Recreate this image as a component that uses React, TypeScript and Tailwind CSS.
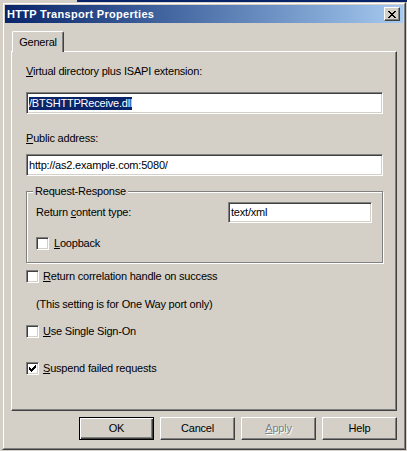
import React from 'react';

// classic Win2k style bevels
const raised = "border border-t-white border-l-white border-r-[#404040] border-b-[#404040] shadow-[inset_-1px_-1px_0_#808080]";
const sunken = "border border-t-[#808080] border-l-[#808080] border-r-white border-b-white shadow-[inset_1px_1px_0_#404040,inset_-1px_-1px_0_#d4d0c8]";

const CHECK = [
  [0, 2, 3], [1, 3, 3], [2, 4, 3], [3, 3, 3], [4, 2, 3], [5, 1, 3], [6, 0, 3],
];

const CROSS = [
  "XX....XX",
  ".XX..XX.",
  "..XXXX..",
  "...XX...",
  "..XXXX..",
  ".XX..XX.",
  "XX....XX",
];

function CheckMark() {
  return (
    <svg width="7" height="7" viewBox="0 0 7 7" shapeRendering="crispEdges">
      {CHECK.map(([x, y, h]) => (
        <rect key={x} x={x} y={y} width="1" height={h} fill="#000" />
      ))}
    </svg>
  );
}

function CloseGlyph() {
  return (
    <svg width="8" height="7" viewBox="0 0 8 7" shapeRendering="crispEdges">
      {CROSS.map((row, y) =>
        row.split('').map((c, x) =>
          c === 'X' ? <rect key={`${x}-${y}`} x={x} y={y} width="1" height="1" fill="#000" /> : null
        )
      )}
    </svg>
  );
}

function Checkbox({ checked = false }: { checked?: boolean }) {
  return (
    <div className={`w-[13px] h-[13px] bg-white flex items-center justify-center shrink-0 ${sunken}`}>
      {checked && <CheckMark />}
    </div>
  );
}

function Key({ children }: { children: React.ReactNode }) {
  return <span className="underline underline-offset-[1px] decoration-1">{children}</span>;
}

function CheckRow({ checked, keyChar, rest, gap = "ml-[4px]" }: { checked?: boolean; keyChar: string; rest: string; gap?: string }) {
  return (
    <div className="flex items-center h-[13px]">
      <Checkbox checked={checked} />
      <span className={`${gap} leading-[13px]`}>
        <Key>{keyChar}</Key>{rest}
      </span>
    </div>
  );
}

function Button({ label, isDefault, disabled }: { label: React.ReactNode; isDefault?: boolean; disabled?: boolean }) {
  const frame = isDefault
    ? "border border-black shadow-[inset_1px_1px_0_white,inset_-1px_-1px_0_#404040,inset_-2px_-2px_0_#808080]"
    : raised;
  return (
    <div className={`w-[75px] h-[23px] flex items-center justify-center ${frame}`}>
      <span className={disabled ? "text-[#808080] [text-shadow:1px_1px_0_white]" : ""}>{label}</span>
    </div>
  );
}

export default function App() {
  return (
    <div className="w-[407px] h-[451px] bg-[#d4d0c8] overflow-hidden text-[11px] tracking-[-0.2px] text-black font-['Liberation_Sans','Arial',sans-serif]">
      <div className="flex h-[2px]">
        <div className="w-[77px] bg-[#d4d0c8]" />
        <div className="flex-1 bg-[#0a246a]" />
      </div>

      {/* dialog window */}
      <div className="ml-[2px] w-[404px] h-[448px] border border-t-[#d4d0c8] border-l-[#d4d0c8] border-r-[#404040] border-b-[#404040]">
        <div className="h-full border border-t-white border-l-white border-r-[#808080] border-b-[#808080] p-px">
          {/* title bar */}
          <div className="h-[18px] flex items-center justify-between bg-linear-to-r from-[#0a246a] to-[#a6caf0]">
            <span className="pl-[2px] text-white font-bold tracking-[0.3px] leading-[18px]">HTTP Transport Properties</span>
            <div className={`w-[16px] h-[14px] mr-[3px] bg-[#d4d0c8] flex items-center justify-center ${raised}`}>
              <CloseGlyph />
            </div>
          </div>

          <div className="pl-[6px] pt-[8px]">
            {/* tab */}
            <div className="relative z-10 -mb-px ml-px w-[52px] h-[21px] bg-[#d4d0c8] rounded-t-[2px] border-t border-l border-r border-t-white border-l-white border-r-[#404040] shadow-[inset_-1px_0_0_#808080] flex items-center justify-center">
              <span className="leading-[13px]">General</span>
            </div>

            {/* tab panel */}
            <div className="w-[386px] h-[360px] border border-t-white border-l-white border-r-[#404040] border-b-[#404040] shadow-[inset_-1px_-1px_0_#808080] pl-[14px]">
              <div className="mt-[13px] leading-[13px]">
                <Key>V</Key>irtual directory plus ISAPI extension:
              </div>
              <div className={`mt-[14px] w-[357px] h-[22px] bg-white flex items-center pl-[2px] ${sunken}`}>
                <span className="bg-[#0a246a] text-white leading-[13px]">/BTSHTTPReceive.dll</span>
              </div>

              <div className="mt-[18px] leading-[13px]">
                <Key>P</Key>ublic address:
              </div>
              <div className={`mt-[9px] w-[357px] h-[22px] bg-white flex items-center pl-[2px] ${sunken}`}>
                <span className="leading-[13px]">http://as2.example.com:5080/</span>
              </div>

              <fieldset className="mt-[9px] w-[357px] p-0 m-0 min-w-0 border border-[#808080] shadow-[inset_1px_1px_0_white,1px_1px_0_white]">
                <legend className="ml-[6px] px-[2px] leading-[13px] bg-[#d4d0c8]">Request-Response</legend>
                <div className="pl-[9px] pr-[10px] pb-[12px]">
                  <div className="mt-[4px] flex items-center justify-between h-[21px]">
                    <span className="leading-[13px]">
                      Return <Key>c</Key>ontent type:
                    </span>
                    <div className={`w-[144px] h-[21px] bg-white flex items-center pl-[2px] ${sunken}`}>
                      <span className="leading-[13px]">text/xml</span>
                    </div>
                  </div>
                  <div className="mt-[14px]">
                    <CheckRow keyChar="L" rest="oopback" gap="ml-[5px]" />
                  </div>
                </div>
              </fieldset>

              <div className="mt-[7px]">
                <CheckRow keyChar="R" rest="eturn correlation handle on success" />
              </div>
              <div className="mt-[15px] pl-[10px] leading-[13px]">(This setting is for One Way port only)</div>
              <div className="mt-[14px]">
                <CheckRow keyChar="U" rest="se Single Sign-On" />
              </div>
              <div className="mt-[24px]">
                <CheckRow checked keyChar="S" rest="uspend failed requests" />
              </div>
            </div>

            {/* buttons */}
            <div className="mt-[6px] w-[386px] flex justify-end gap-[6px]">
              <Button label="OK" isDefault />
              <Button label="Cancel" />
              <Button label={<><Key>A</Key>pply</>} disabled />
              <Button label="Help" />
            </div>
          </div>
        </div>
      </div>
    </div>
  );
}
